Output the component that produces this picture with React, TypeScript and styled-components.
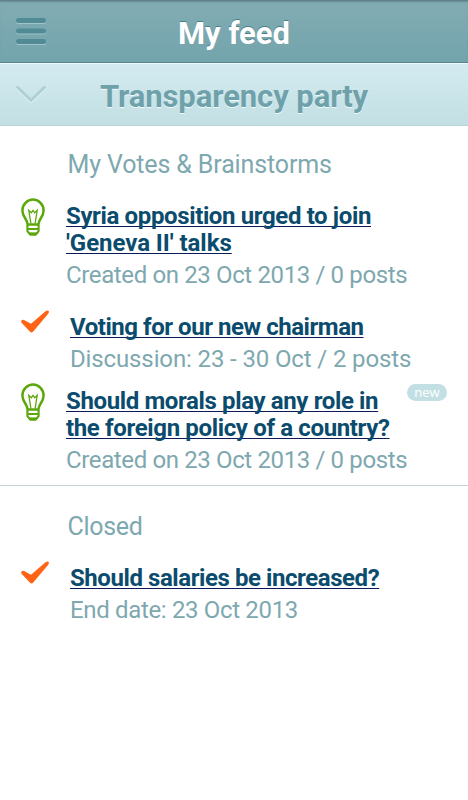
import React from "react";
import styled, { createGlobalStyle } from "styled-components";

const GlobalStyle = createGlobalStyle`
  *, *::before, *::after { box-sizing: border-box; }
  html, body { margin: 0; background: #fff; }
  body { font-family: Roboto, "Liberation Sans", sans-serif; }
`;

const Screen = styled.div`
  width: 468px;
  min-height: 800px;
  background: #fff;
  overflow: hidden;
`;

const TopBar = styled.header`
  display: grid;
  grid-template-columns: 62px 1fr 62px;
  align-items: center;
  height: 63px;
  background: linear-gradient(#82acb3, #73a4ac);
  border-top: 1px solid #647f87;
  border-bottom: 1px solid #548690;
  box-shadow: inset 0 2px 2px -1px #648c95;
`;

const BarButton = styled.button`
  display: flex;
  padding: 0 0 1px 15px;
  border: 0;
  background: none;
`;

const PageTitle = styled.h1`
  margin: 0;
  padding-top: 5px;
  color: #fff;
  font-size: 31px;
  line-height: 40px;
  font-weight: 700;
  text-align: center;
  white-space: nowrap;
  text-shadow: 0 -1px 0 #487e88;
`;

const GroupBar = styled.div`
  display: grid;
  grid-template-columns: 62px 1fr 62px;
  align-items: center;
  height: 63px;
  background: linear-gradient(#d3ebf0, #c2dfe3);
  border-top: 1px solid #eefafc;
  border-bottom: 1px solid #b8d4d9;
`;

const GroupTitle = styled.h2`
  margin: 0;
  padding-top: 5px;
  color: #6fa1aa;
  font-size: 31px;
  line-height: 40px;
  font-weight: 700;
  letter-spacing: -0.09px;
  text-align: center;
  white-space: nowrap;
  text-shadow: 0 1px 0 #eefafc;
`;

const Section = styled.section<{ $top: number; $divided?: boolean }>`
  padding-top: ${(p) => p.$top}px;
  border-bottom: ${(p) => (p.$divided ? "1px solid #c8d3d9" : "0")};
`;

const SectionTitle = styled.h3<{ $tracking: number }>`
  margin: 0 0 22px;
  padding-left: 67.5px;
  color: #7ea8af;
  font-size: 25px;
  line-height: 32px;
  font-weight: 400;
  letter-spacing: ${(p) => p.$tracking}px;
`;

const Item = styled.article<{ $indent: number; $gap: number }>`
  display: grid;
  grid-template-columns: ${(p) => p.$indent}px minmax(0, 1fr) auto;
  align-items: start;
  margin-bottom: ${(p) => p.$gap}px;
`;

const IconCell = styled.div<{ $up: number }>`
  display: flex;
  padding-left: 20px;
  margin-top: ${(p) => -p.$up}px;
`;

const Link = styled.a`
  display: block;
  color: #0b4c6e;
  font-size: 24px;
  line-height: 27px;
  font-weight: 700;
  white-space: nowrap;
`;

const LinkLine = styled.span<{ $tracking: number }>`
  display: block;
  letter-spacing: ${(p) => p.$tracking}px;
  text-decoration: underline 1px #0a1a55;
  text-underline-offset: 2px;
  text-decoration-skip-ink: none;
`;

const Meta = styled.p<{ $tracking: number }>`
  margin: 2px 0 0;
  color: #7ea8af;
  font-size: 24px;
  line-height: 32px;
  letter-spacing: ${(p) => p.$tracking}px;
  white-space: nowrap;
`;

const Badge = styled.span`
  margin: -4px 21px 0 0;
  width: 40px;
  height: 17px;
  border-radius: 9px;
  background: #c2dfe4;
  color: #fff;
  font: 13px/16px "Open Sans", sans-serif;
  text-align: center;
`;

const Bulb = () => (
  <svg width="26" height="40" viewBox="0 0 26 40" fill="none" stroke="#5ca70b">
    <path
      d="M7.6 26.4C7.600 21.500 2.400 19 2.400 12.400A10.600 10.800 0 0 1 23.600 12.400C23.600 19 18.400 21.500 18.400 26.400Z"
      strokeWidth="2.5"
      strokeLinejoin="round"
    />
    <path d="M10.900 25.500L8.800 12.300L11.300 14.800L13 12.300L14.700 14.800L17.200 12.300L15.100 25.500" strokeWidth="1.3" />
    <path d="M7.400 27V33.200L10.200 36.600H15.800L18.600 33.200V27" strokeWidth="2.1" strokeLinejoin="round" />
    <path d="M7 31H19" strokeWidth="2" />
    <path d="M8 35.200H18" strokeWidth="1.600" />
  </svg>
);

const Check = () => (
  <svg width="30" height="24" viewBox="0 0 30 24" fill="#ff6314">
    <path d="M1.200 11.200Q2 9.200 4 10L11 13.800L25.500 1.200Q27.800-.2 28.800 1.200Q29.300 2.300 28 4L13 21.700Q11.500 23.200 10 21.700L1.800 13Q.9 12 1.200 11.200Z" />
  </svg>
);

type Line = { text: string; tracking: number };
type Entry = {
  kind: "idea" | "vote";
  lines: Line[];
  meta: Line;
  gap: number;
  isNew?: boolean;
};

const openEntries: Entry[] = [
  {
    kind: "idea",
    lines: [
      { text: "Syria opposition urged to join", tracking: -0.37 },
      { text: "'Geneva II' talks", tracking: -0.05 },
    ],
    meta: { text: "Created on 23 Oct 2013 / 0 posts", tracking: -0.37 },
    gap: 23,
  },
  {
    kind: "vote",
    lines: [{ text: "Voting for our new chairman", tracking: -0.46 }],
    meta: { text: "Discussion: 23 - 30 Oct / 2 posts", tracking: -0.13 },
    gap: 13,
  },
  {
    kind: "idea",
    lines: [
      { text: "Should morals play any role in", tracking: -0.37 },
      { text: "the foreign policy of a country?", tracking: -0.355 },
    ],
    meta: { text: "Created on 23 Oct 2013 / 0 posts", tracking: -0.37 },
    gap: 9,
    isNew: true,
  },
];

const closedEntries: Entry[] = [
  {
    kind: "vote",
    lines: [{ text: "Should salaries be increased?", tracking: -0.43 }],
    meta: { text: "End date: 23 Oct 2013", tracking: -0.34 },
    gap: 0,
  },
];

const Feed = ({ entries }: { entries: Entry[] }) => (
  <>
    {entries.map((entry) => {
      const idea = entry.kind === "idea";
      return (
        <Item key={entry.lines[0].text} $indent={idea ? 66 : 70} $gap={entry.gap}>
          <IconCell $up={idea ? 5 : 4}>{idea ? <Bulb /> : <Check />}</IconCell>
          <div>
            <Link>
              {entry.lines.map((line) => (
                <LinkLine key={line.text} $tracking={line.tracking}>
                  {line.text}
                </LinkLine>
              ))}
            </Link>
            <Meta $tracking={entry.meta.tracking}>{entry.meta.text}</Meta>
          </div>
          {entry.isNew && <Badge>new</Badge>}
        </Item>
      );
    })}
  </>
);

export default function App() {
  return (
    <Screen>
      <GlobalStyle />
      <TopBar>
        <BarButton aria-label="Menu">
          <svg width="32" height="28" viewBox="0 0 32 28">
            <g fill="#9fc4ca">
              <rect x="1" y="2" width="30" height="5" rx="2.5" />
              <rect x="1" y="12.5" width="30" height="5" rx="2.5" />
              <rect x="1" y="23" width="30" height="5" rx="2.5" />
            </g>
            <g fill="#518b96">
              <rect x="1" y="1" width="30" height="5" rx="2.5" />
              <rect x="1" y="11.5" width="30" height="5" rx="2.5" />
              <rect x="1" y="22" width="30" height="5" rx="2.5" />
            </g>
          </svg>
        </BarButton>
        <PageTitle>My feed</PageTitle>
      </TopBar>
      <GroupBar>
        <BarButton aria-label="Choose group">
          <svg width="32" height="20" viewBox="0 0 32 20" fill="none" strokeWidth="3" strokeLinecap="round">
            <path d="M2.500 4.500L16 17.500L29.500 4.500" stroke="#e6f6f8" />
            <path d="M2.500 3.300L16 16.300L29.500 3.300" stroke="#aed1d6" />
          </svg>
        </BarButton>
        <GroupTitle>Transparency party</GroupTitle>
      </GroupBar>
      <Section $top={23} $divided>
        <SectionTitle $tracking={-0.13}>My Votes &amp; Brainstorms</SectionTitle>
        <Feed entries={openEntries} />
      </Section>
      <Section $top={25}>
        <SectionTitle $tracking={-0.3}>Closed</SectionTitle>
        <Feed entries={closedEntries} />
      </Section>
    </Screen>
  );
}
